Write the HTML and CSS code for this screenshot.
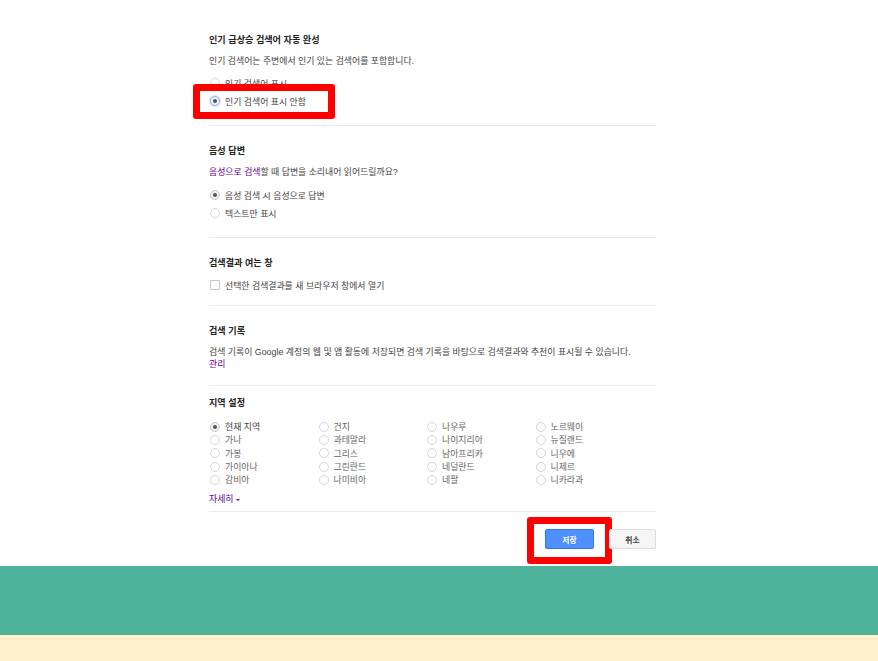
FILE: index.html
```html
<!DOCTYPE html>
<html lang="ko">
  <head>
    <meta charset="UTF-8" />
    <meta name="viewport" content="width=device-width, initial-scale=1.0" />
    <title>검색 설정</title>
    <link rel="stylesheet" href="styles.css">
  </head>
  <body>
    <div class="page">
      <div class="settings">

        <div class="section first">
          <h3 class="title">인기 급상승 검색어 자동 완성</h3>
          <p class="desc">인기 검색어는 주변에서 인기 있는 검색어를 포함합니다.</p>
          <div class="option"><span class="radio"></span>인기 검색어 표시</div>
          <div class="option marked">
            <span class="radio checked focus"></span>인기 검색어 표시 안함
            <span class="mark mark-radio"></span>
          </div>
        </div>

        <div class="section voice">
          <h3 class="title">음성 답변</h3>
          <p class="desc"><a class="link" href="#">음성으로 검색</a>할 때 답변을 소리내어 읽어드릴까요?</p>
          <div class="option"><span class="radio checked"></span>음성 검색 시 음성으로 답변</div>
          <div class="option"><span class="radio"></span>텍스트만 표시</div>
        </div>

        <div class="section compact">
          <h3 class="title">검색결과 여는 창</h3>
          <div class="option"><span class="checkbox"></span>선택한 검색결과를 새 브라우저 창에서 열기</div>
        </div>

        <div class="section history">
          <h3 class="title">검색 기록</h3>
          <p class="desc">검색 기록이 Google 계정의 웹 및 앱 활동에 저장되면 검색 기록을 바탕으로 검색결과와 추천이 표시될 수 있습니다.<br><a class="link" href="#">관리</a></p>
        </div>

        <div class="section region">
          <h3 class="title">지역 설정</h3>
          <div class="region-grid">
            <div class="region-item current"><span class="radio checked"></span>현재 지역</div>
            <div class="region-item"><span class="radio"></span>건지</div>
            <div class="region-item"><span class="radio"></span>나우루</div>
            <div class="region-item"><span class="radio"></span>노르웨이</div>
            <div class="region-item"><span class="radio"></span>가나</div>
            <div class="region-item"><span class="radio"></span>과테말라</div>
            <div class="region-item"><span class="radio"></span>나이지리아</div>
            <div class="region-item"><span class="radio"></span>뉴질랜드</div>
            <div class="region-item"><span class="radio"></span>가봉</div>
            <div class="region-item"><span class="radio"></span>그리스</div>
            <div class="region-item"><span class="radio"></span>남아프리카</div>
            <div class="region-item"><span class="radio"></span>니우에</div>
            <div class="region-item"><span class="radio"></span>가이아나</div>
            <div class="region-item"><span class="radio"></span>그린란드</div>
            <div class="region-item"><span class="radio"></span>네덜란드</div>
            <div class="region-item"><span class="radio"></span>니제르</div>
            <div class="region-item"><span class="radio"></span>감비아</div>
            <div class="region-item"><span class="radio"></span>나미비아</div>
            <div class="region-item"><span class="radio"></span>네팔</div>
            <div class="region-item"><span class="radio"></span>니카라과</div>
          </div>
          <a class="link more" href="#">자세히 <span class="caret"></span></a>
        </div>

        <div class="actions">
          <button class="btn btn-save">저장<span class="mark mark-save"></span></button>
          <button class="btn btn-cancel">취소</button>
        </div>
      </div>
    </div>
    <div class="band-green"></div>
    <div class="band-cream"></div>
  </body>
</html>
```

FILE: styles.css
```css
body {
  margin: 0;
  background: #fff;
  font-family: "Liberation Sans", Arial, "Noto Sans CJK KR", sans-serif;
  font-size: 8.9px;
  color: #333;
}
.page {
  padding-top: 15px;
}
.settings {
  width: 447px;
  margin-left: 209px;
}
.section {
  padding: 19px 0 15px;
  border-bottom: 1px solid #ebebeb;
}
.section.compact {
  padding-bottom: 11px;
}
.section.history {
  padding-bottom: 15px;
}
.section.region {
  padding: 11px 0 6px;
}
.title {
  margin: 0 0 9px;
  font-size: 9.1px;
  line-height: 12px;
  font-weight: bold;
  color: #222;
}
.compact .title {
  margin-bottom: 7px;
}
.desc {
  margin: 0 0 7px;
  line-height: 12px;
  color: #444;
}
.voice .desc {
  margin-bottom: 8px;
}
.history .desc {
  margin: 0;
  line-height: 12px;
}
.link {
  color: #660099;
  text-decoration: none;
}
.option {
  position: relative;
  display: flex;
  align-items: center;
  height: 18px;
  color: #444;
}
.radio {
  box-sizing: border-box;
  width: 10px;
  height: 10px;
  margin: 0 5px 0 1px;
  border: 1px solid #d6d6d6;
  border-radius: 50%;
  background: #fff;
  position: relative;
  flex-shrink: 0;
}
.radio.checked {
  border-color: #c8c8c8;
  background: #f1f1f1;
}
.radio.checked::after {
  content: "";
  position: absolute;
  left: 2px;
  top: 2px;
  width: 4px;
  height: 4px;
  border-radius: 50%;
  background: #555;
}
.radio.focus {
  border-color: #8fb4f5;
  box-shadow: 0 0 0 1px #d8e5fc;
}
.checkbox {
  box-sizing: border-box;
  width: 10px;
  height: 10px;
  margin: 0 5px 0 1px;
  border: 1px solid #c6c6c6;
  border-radius: 1px;
  flex-shrink: 0;
}
.region-grid {
  display: grid;
  grid-template-columns: repeat(4, 108.5px);
  margin-top: 11px;
}
.region-item {
  display: flex;
  align-items: center;
  height: 13.3px;
  color: #666;
}
.region-item.current {
  color: #444;
}
.more {
  display: inline-block;
  margin-top: 7px;
  line-height: 12px;
}
.caret {
  display: inline-block;
  vertical-align: middle;
  border-left: 2px solid transparent;
  border-right: 2px solid transparent;
  border-top: 2px solid #660099;
}
.actions {
  display: flex;
  justify-content: flex-end;
  gap: 15px;
  padding: 17px 0;
}
.btn {
  position: relative;
  box-sizing: border-box;
  height: 20px;
  padding: 0;
  border-radius: 2px;
  font-family: inherit;
  font-size: 7.8px;
  font-weight: bold;
}
.btn-save {
  width: 49px;
  background: #4d90fe;
  border: 1px solid #3079ed;
  color: #fff;
}
.btn-cancel {
  width: 47px;
  background: #f5f5f5;
  border: 1px solid #dcdcdc;
  color: #444;
}
.mark {
  position: absolute;
  box-sizing: border-box;
  border: 7px solid #ff0000;
  border-radius: 3px;
}
.mark-radio {
  left: -16px;
  top: -8px;
  width: 142px;
  height: 35px;
}
.mark-save {
  left: -19px;
  top: -13px;
  width: 85px;
  height: 47px;
}
.band-green {
  height: 69px;
  background: #4db29a;
}
.band-cream {
  height: 26px;
  background: #fff0cc;
}
```
